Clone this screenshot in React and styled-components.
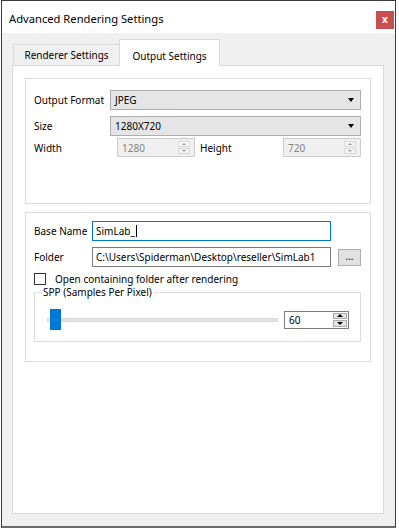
import React from 'react';
import styled, { createGlobalStyle } from 'styled-components';

const GlobalStyle = createGlobalStyle`
  html, body { margin: 0; padding: 0; background: #fff; }
  body {
    font-family: "Noto Sans", "Open Sans", sans-serif;
    font-size: 10px;
    color: #000;
  }
  * { box-sizing: border-box; }
`;

const Window = styled.div`
  margin-left: 1px;
  width: 395px;
  height: 528px;
  border: 1px solid #3b3b3b;
  border-bottom: 2px solid #6a6a6a;
  background: #f0f0f0;
  display: flex;
  flex-direction: column;
`;

const TitleBar = styled.div`
  height: 32px;
  flex: none;
  background: #fff;
  display: flex;
  justify-content: space-between;
  align-items: flex-start;
  padding-left: 7px;
  padding-right: 1px;
`;

const Title = styled.div`
  margin-top: 10px;
  font-size: 11.2px;
  line-height: 16px;
  color: #000;
`;

const CloseButton = styled.div`
  margin-top: 10px;
  width: 18px;
  height: 18px;
  background: #c94f4f;
  color: #fff;
  font-size: 10px;
  font-weight: 700;
  line-height: 17px;
  text-align: center;
`;

const Body = styled.div`
  flex: 1;
  display: flex;
  flex-direction: column;
  padding: 6px 11px 12px 10px;
`;

const TabBar = styled.div`
  height: 26px;
  flex: none;
  display: flex;
  align-items: flex-end;
  padding-left: 1px;
`;

const Tab = styled.div`
  width: ${p => p.$width}px;
  height: ${p => (p.$active ? 27 : 21)}px;
  margin-left: ${p => (p.$active ? -1 : 0)}px;
  margin-bottom: ${p => (p.$active ? -1 : 0)}px;
  padding-top: ${p => (p.$active ? 5 : 0)}px;
  position: relative;
  z-index: ${p => (p.$active ? 1 : 0)};
  background: ${p => (p.$active ? '#fff' : '#f0f0f0')};
  border: 1px solid #d9d9d9;
  border-bottom: none;
  display: flex;
  align-items: center;
  justify-content: center;
  font-size: 10px;
  white-space: nowrap;
`;

const Panel = styled.div`
  flex: 1;
  background: #fff;
  border: 1px solid #d9d9d9;
  padding: 12px 12px 0 12px;
  display: flex;
  flex-direction: column;
  gap: 8px;
`;

const Group = styled.div`
  height: ${p => p.$height}px;
  flex: none;
  border: 1px solid #dcdcdc;
  padding: ${p => p.$padTop}px 9px 0 8px;
  display: flex;
  flex-direction: column;
`;

const Row = styled.div`
  display: flex;
  align-items: center;
  height: ${p => p.$height || 20}px;
  margin-top: ${p => p.$top || 0}px;
`;

const Label = styled.div`
  width: ${p => p.$width}px;
  margin-left: ${p => p.$offset || 0}px;
  flex: none;
  white-space: nowrap;
  color: #000;
`;

const Combo = styled.div`
  flex: 1;
  height: 20px;
  background: #e5e5e5;
  border: 1px solid #adadad;
  display: flex;
  align-items: center;
  justify-content: space-between;
  padding: 0 6px 0 4px;
`;

const ComboArrow = styled.div`
  width: 0;
  height: 0;
  border-left: 3.5px solid transparent;
  border-right: 3.5px solid transparent;
  border-top: 4px solid #000;
`;

const Spin = styled.div`
  width: ${p => p.$width}px;
  height: ${p => p.$height}px;
  flex: none;
  background: ${p => (p.$disabled ? '#f0f0f0' : '#fff')};
  border: 1px solid ${p => (p.$disabled ? '#cccccc' : '#7a7a7a')};
  display: flex;
  align-items: stretch;
  padding: 1px;
`;

const SpinValue = styled.div`
  flex: 1;
  display: flex;
  align-items: center;
  padding-left: 3px;
  color: ${p => (p.$disabled ? '#838383' : '#000')};
`;

const SpinButtons = styled.div`
  width: ${p => (p.$disabled ? 12 : 14)}px;
  margin: ${p => (p.$disabled ? '1px 3px 1px 0' : '0')};
  display: flex;
  flex-direction: column;
  gap: 1px;
`;

const SpinButton = styled.div`
  flex: 1;
  background: ${p => (p.$disabled ? '#f4f4f4' : '#e5e5e5')};
  border: 1px solid ${p => (p.$disabled ? '#dadada' : '#adadad')};
  display: flex;
  align-items: center;
  justify-content: center;
`;

const ArrowUp = styled.div`
  width: 0;
  height: 0;
  border-left: ${p => (p.$disabled ? 2.5 : 3)}px solid transparent;
  border-right: ${p => (p.$disabled ? 2.5 : 3)}px solid transparent;
  border-bottom: ${p => (p.$disabled ? 2.5 : 3)}px solid ${p => (p.$disabled ? '#9a9a9a' : '#000')};
`;

const ArrowDown = styled.div`
  width: 0;
  height: 0;
  border-left: ${p => (p.$disabled ? 2.5 : 3)}px solid transparent;
  border-right: ${p => (p.$disabled ? 2.5 : 3)}px solid transparent;
  border-top: ${p => (p.$disabled ? 2.5 : 3)}px solid ${p => (p.$disabled ? '#9a9a9a' : '#000')};
`;

const TextField = styled.div`
  width: ${p => p.$width}px;
  height: 20px;
  flex: none;
  background: #fff;
  border: 1px solid ${p => (p.$focused ? '#0078d7' : '#7a7a7a')};
  display: flex;
  align-items: center;
  padding-left: 3px;
  white-space: nowrap;
  overflow: hidden;
`;

const Caret = styled.span`
  display: inline-block;
  width: 1px;
  height: 12px;
  background: #000;
  margin-left: 1px;
`;

const SmallButton = styled.div`
  width: 23px;
  height: 17px;
  margin-left: 7px;
  background: #e1e1e1;
  border: 1px solid #adadad;
  display: flex;
  align-items: center;
  justify-content: center;
  font-size: 10px;
  line-height: 1;
  padding-bottom: 3px;
`;

const CheckRow = styled.div`
  display: flex;
  align-items: center;
  gap: 9px;
  margin-top: 6px;
  height: 12px;
  line-height: 12px;
`;

const CheckBox = styled.div`
  width: 12px;
  height: 12px;
  flex: none;
  border: 1px solid #333;
  background: #fff;
`;

const CheckLabel = styled.span`
  line-height: 12px;
  white-space: nowrap;
`;

const Fieldset = styled.fieldset`
  margin: 1px 0 0 0;
  padding: 0;
  min-width: 0;
  border: 1px solid #dcdcdc;
`;

const Legend = styled.legend`
  margin-left: 6px;
  padding: 0 2px;
  line-height: 12px;
  font-size: 10px;
`;

const SliderRow = styled.div`
  display: flex;
  align-items: center;
  gap: 6px;
  padding: 11px 11px 11px 12px;
`;

const Slider = styled.div`
  flex: 1;
  height: 21px;
  position: relative;
`;

const Track = styled.div`
  position: absolute;
  left: 0;
  right: 0;
  top: 9px;
  height: 4px;
  background: #e3e3e3;
  border: 1px solid #d8d8d8;
`;

const Thumb = styled.div`
  position: absolute;
  top: 0;
  width: 11px;
  height: 21px;
  background: #0078d7;
`;

function SpinBox({ value, width, height, disabled }) {
  return (
    <Spin $width={width} $height={height} $disabled={disabled}>
      <SpinValue $disabled={disabled}>{value}</SpinValue>
      <SpinButtons $disabled={disabled}>
        <SpinButton $disabled={disabled}><ArrowUp $disabled={disabled} /></SpinButton>
        <SpinButton $disabled={disabled}><ArrowDown $disabled={disabled} /></SpinButton>
      </SpinButtons>
    </Spin>
  );
}

export default function App() {
  const thumbLeft = 3;
  return (
    <>
      <GlobalStyle />
      <Window>
        <TitleBar>
          <Title>Advanced Rendering Settings</Title>
          <CloseButton>x</CloseButton>
        </TitleBar>
        <Body>
          <TabBar>
            <Tab $width={107}>Renderer Settings</Tab>
            <Tab $width={101} $active>Output Settings</Tab>
          </TabBar>
          <Panel>
            <Group $height={126} $padTop={11}>
              <Row>
                <Label $width={76}>Output Format</Label>
                <Combo>JPEG<ComboArrow /></Combo>
              </Row>
              <Row $top={6}>
                <Label $width={76}>Size</Label>
                <Combo>1280X720<ComboArrow /></Combo>
              </Row>
              <Row $top={2} $height={19}>
                <Label $width={83}>Width</Label>
                <SpinBox value="1280" width={78} height={19} disabled />
                <Label $width={83} $offset={5}>Height</Label>
                <SpinBox value="720" width={78} height={19} disabled />
              </Row>
            </Group>
            <Group $height={150} $padTop={8}>
              <Row>
                <Label $width={58}>Base Name</Label>
                <TextField $width={239} $focused>SimLab_<Caret /></TextField>
              </Row>
              <Row $top={6}>
                <Label $width={58}>Folder</Label>
                <TextField $width={239}>C:\Users\Spiderman\Desktop\reseller\SimLab1</TextField>
                <SmallButton>...</SmallButton>
              </Row>
              <CheckRow>
                <CheckBox />
                <CheckLabel>Open containing folder after rendering</CheckLabel>
              </CheckRow>
              <Fieldset>
                <Legend>SPP (Samples Per Pixel)</Legend>
                <SliderRow>
                  <Slider>
                    <Track />
                    <Thumb style={{ left: thumbLeft }} />
                  </Slider>
                  <SpinBox value="60" width={65} height={18} />
                </SliderRow>
              </Fieldset>
            </Group>
          </Panel>
        </Body>
      </Window>
    </>
  );
}
